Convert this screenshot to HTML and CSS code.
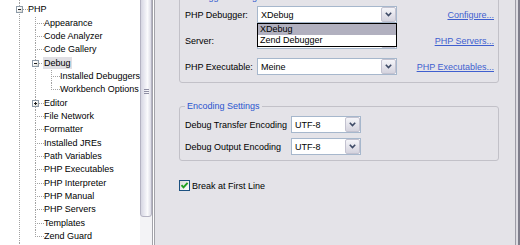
FILE: index.html
```html
<!DOCTYPE html>
<html>
<head>
<meta charset="utf-8">
<title>Debug preferences</title>
<link rel="stylesheet" href="styles.css">
</head>
<body>
<div class="window">
  <div class="tree-pane">
    <ul class="tree root">
      <li><div class="row"><span class="exp plus"></span><span class="label">General</span></div></li>
      <li>
        <div class="row"><span class="exp minus"></span><span class="label">PHP</span></div>
        <ul class="tree">
          <li><div class="row"><span class="label">Appearance</span></div></li>
          <li><div class="row"><span class="label">Code Analyzer</span></div></li>
          <li><div class="row"><span class="label">Code Gallery</span></div></li>
          <li>
            <div class="row"><span class="exp minus"></span><span class="label sel">Debug</span></div>
            <ul class="tree">
              <li><div class="row"><span class="label">Installed Debuggers</span></div></li>
              <li><div class="row"><span class="label">Workbench Options</span></div></li>
            </ul>
          </li>
          <li><div class="row"><span class="exp plus"></span><span class="label">Editor</span></div></li>
          <li><div class="row"><span class="label">File Network</span></div></li>
          <li><div class="row"><span class="label">Formatter</span></div></li>
          <li><div class="row"><span class="label">Installed JREs</span></div></li>
          <li><div class="row"><span class="label">Path Variables</span></div></li>
          <li><div class="row"><span class="label">PHP Executables</span></div></li>
          <li><div class="row"><span class="label">PHP Interpreter</span></div></li>
          <li><div class="row"><span class="label">PHP Manual</span></div></li>
          <li><div class="row"><span class="label">PHP Servers</span></div></li>
          <li><div class="row"><span class="label">Templates</span></div></li>
          <li><div class="row"><span class="label">Zend Guard</span></div></li>
        </ul>
      </li>
      <li><div class="row"><span class="exp plus"></span><span class="label">Run/Debug</span></div></li>
    </ul>
  </div>
  <div class="vscroll"><div class="thumb"><span class="grip"></span></div></div>
  <div class="divider"></div>
  <div class="content">
    <fieldset class="group group-debugger">
      <legend>Debugger Settings</legend>
      <div class="form-grid grid-debugger">
        <span class="flabel">PHP Debugger:</span>
        <div class="combo-wrap">
          <div class="combo"><span class="value">XDebug</span><span class="arrow"><svg width="7" height="5" viewBox="0 0 7 5"><polyline points="0.8,0.8 3.5,3.6 6.2,0.8" fill="none" stroke="#3d4a66" stroke-width="1.6"/></svg></span></div>
          <div class="dropdown">
            <div class="opt active">XDebug</div>
            <div class="opt">Zend Debugger</div>
          </div>
        </div>
        <span></span>
        <a class="link" href="#">Configure...</a>

        <span class="flabel">Server:</span>
        <div class="combo"><span class="value">Default</span><span class="arrow"><svg width="7" height="5" viewBox="0 0 7 5"><polyline points="0.8,0.8 3.5,3.6 6.2,0.8" fill="none" stroke="#3d4a66" stroke-width="1.6"/></svg></span></div>
        <span></span>
        <a class="link" href="#">PHP Servers...</a>

        <span class="flabel">PHP Executable:</span>
        <div class="combo"><span class="value">Meine</span><span class="arrow"><svg width="7" height="5" viewBox="0 0 7 5"><polyline points="0.8,0.8 3.5,3.6 6.2,0.8" fill="none" stroke="#3d4a66" stroke-width="1.6"/></svg></span></div>
        <span></span>
        <a class="link" href="#">PHP Executables...</a>
      </div>
    </fieldset>

    <fieldset class="group group-encoding">
      <legend>Encoding Settings</legend>
      <div class="form-grid grid-encoding">
        <span class="flabel">Debug Transfer Encoding</span>
        <div class="combo"><span class="value">UTF-8</span><span class="arrow"><svg width="7" height="5" viewBox="0 0 7 5"><polyline points="0.8,0.8 3.5,3.6 6.2,0.8" fill="none" stroke="#3d4a66" stroke-width="1.6"/></svg></span></div>
        <span class="flabel">Debug Output Encoding</span>
        <div class="combo"><span class="value">UTF-8</span><span class="arrow"><svg width="7" height="5" viewBox="0 0 7 5"><polyline points="0.8,0.8 3.5,3.6 6.2,0.8" fill="none" stroke="#3d4a66" stroke-width="1.6"/></svg></span></div>
      </div>
    </fieldset>

    <label class="check-row">
      <span class="checkbox"><svg width="9" height="9" viewBox="0 0 9 9"><polyline points="1.5,4.2 3.5,6.4 7.6,1.8" fill="none" stroke="#21a121" stroke-width="1.9"/></svg></span>
      <span class="check-text">Break at First Line</span>
    </label>
  </div>
  <div class="edge"></div>
</div>
</body>
</html>
```

FILE: styles.css
```css
html, body {
  margin: 0;
  padding: 0;
  background: #e4e3e8;
}

body {
  font-family: "Liberation Sans", Arial, sans-serif;
  font-size: 9px;
  color: #000;
}

.window {
  display: flex;
  width: 520px;
  height: 245px;
  overflow: hidden;
}

/* ---------- tree ---------- */
.tree-pane {
  width: 140px;
  flex: none;
  background: #fff;
  overflow: hidden;
}

.tree {
  list-style: none;
  margin: 0 0 0 7px;
  padding: 0;
}

.tree.root {
  margin: -10px 0 0 19px;
}

.tree li {
  position: relative;
  padding-left: 9px;
}

.tree li::before {
  content: "";
  position: absolute;
  left: 0;
  top: 0;
  width: 8px;
  height: 6px;
  border-left: 1px dotted #a2a2a2;
  border-bottom: 1px dotted #a2a2a2;
}

.tree li::after {
  content: "";
  position: absolute;
  left: 0;
  top: 6px;
  bottom: 0;
  border-left: 1px dotted #a2a2a2;
}

.tree li:last-child::after {
  display: none;
}

.row {
  position: relative;
  height: 13.33px;
  line-height: 13.33px;
  white-space: nowrap;
}

.label {
  display: inline-block;
  padding: 0 1px;
  margin-left: -1px;
  line-height: 12px;
}

.label.sel {
  background: #e0dfe4;
}

.exp {
  position: absolute;
  z-index: 1;
  left: -12px;
  top: 3px;
  width: 7px;
  height: 7px;
  box-sizing: border-box;
  border: 1px solid #8e9ba8;
  background: linear-gradient(135deg, #ffffff 30%, #d6d6cf);
}

.exp::before {
  content: "";
  position: absolute;
  left: 1px;
  top: 2px;
  width: 3px;
  height: 1px;
  background: #1f1f1f;
}

.exp.plus::after {
  content: "";
  position: absolute;
  left: 2px;
  top: 1px;
  width: 1px;
  height: 3px;
  background: #1f1f1f;
}

/* ---------- scrollbar ---------- */
.vscroll {
  width: 12px;
  flex: none;
  background: #f3f3f6;
  overflow: hidden;
}

.thumb {
  margin-top: -35px;
  height: 252px;
  box-sizing: border-box;
  border: 1px solid #b4b3c3;
  border-radius: 0 0 3px 3px;
  background: linear-gradient(90deg, #d6d6e2, #e9e9f1 35%, #fafafc 65%, #dcdce6);
  display: flex;
  align-items: center;
  justify-content: center;
}

.grip {
  width: 5px;
  height: 5px;
  background: repeating-linear-gradient(180deg, #8f8fa4 0 1px, transparent 1px 2px);
}

.divider {
  width: 3px;
  flex: none;
  background: linear-gradient(90deg, #a3a3aa 0 1px, #ffffff 1px 2px, #a3a3aa 2px 3px);
}

/* ---------- content ---------- */
.content {
  width: 360px;
  flex: none;
  box-sizing: border-box;
  padding: 0 16px 0 24px;
  background: #e4e3e8;
  display: flex;
  flex-direction: column;
}

.group {
  margin: 0;
  min-width: 0;
  border: 1px solid #c2c1c8;
  border-radius: 3px;
}

.group legend {
  padding: 0 2px;
  margin-left: 0;
  line-height: 11px;
  color: #2b55cf;
}

.group-debugger {
  margin-top: -8px;
  padding: 3px 4px 7px 5px;
}

.group-encoding {
  margin-top: 18px;
  padding: 4px 4px 5px 5px;
}

.form-grid {
  display: grid;
  align-items: center;
}

.grid-debugger {
  grid-template-columns: 72px 140px 1fr auto;
  row-gap: 9px;
}

.grid-encoding {
  grid-template-columns: 106px 70px;
  row-gap: 5px;
}

.flabel {
  white-space: nowrap;
}

.combo-wrap {
  position: relative;
}

.combo {
  display: flex;
  align-items: center;
  height: 17px;
  box-sizing: border-box;
  border: 1px solid #a6b7cc;
  background: #fff;
}

.combo .value {
  flex: 1;
  padding-left: 3px;
}

.combo .arrow {
  width: 15px;
  height: 15px;
  box-sizing: border-box;
  border: 1px solid #c3c2d0;
  border-radius: 2px;
  background: linear-gradient(180deg, #f5f5f9, #d4d3de);
  display: flex;
  align-items: center;
  justify-content: center;
}

.dropdown {
  position: absolute;
  z-index: 2;
  left: 0;
  top: 17px;
  width: 140px;
  box-sizing: border-box;
  border: 1px solid #000;
  background: #fff;
}

.opt {
  height: 11px;
  line-height: 11px;
  padding-left: 2px;
}

.opt.active {
  background: #b1b0bf;
}

.link {
  color: #3f5fcf;
  text-decoration: underline;
  white-space: nowrap;
  justify-self: end;
}

.check-row {
  margin-top: 19px;
  display: flex;
  align-items: center;
  gap: 2px;
}

.checkbox {
  width: 11px;
  height: 11px;
  box-sizing: border-box;
  border: 1px solid #1c5180;
  background: linear-gradient(135deg, #dcdcd7, #ffffff);
  display: flex;
  align-items: center;
  justify-content: center;
}

.edge {
  width: 5px;
  flex: none;
  background: linear-gradient(90deg, #9d9ca6 0 1px, #dddce2 1px 3px, #7f7e8b 3px 5px);
}
```
